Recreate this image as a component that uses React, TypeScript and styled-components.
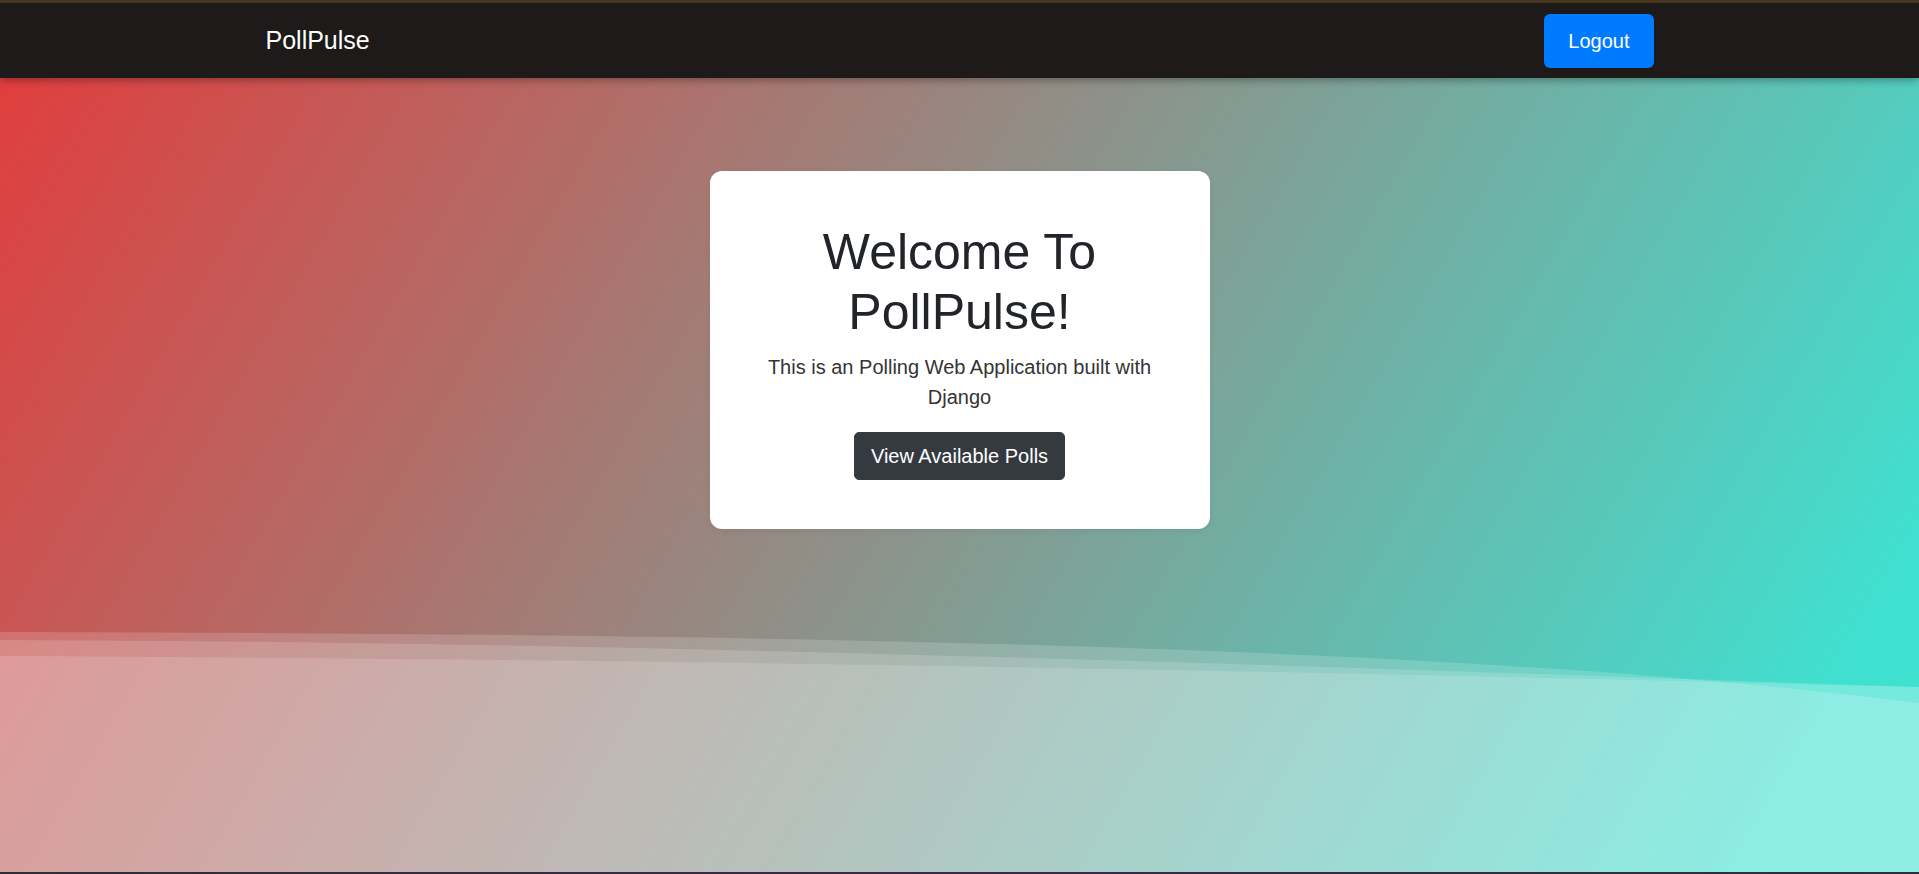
import React from "react";
import styled, { createGlobalStyle } from "styled-components";

const GlobalStyle = createGlobalStyle`
  html, body {
    margin: 0;
    padding: 0;
    background: #2f2a38;
  }
  body {
    font-family: "Liberation Sans", Arial, sans-serif;
    color: #212529;
  }
  * { box-sizing: border-box; }
`;

const Page = styled.div`
  display: flex;
  flex-direction: column;
  min-height: 874px;
  border-top: 3px solid #4b3b1f;
`;

const Navbar = styled.nav`
  height: 75px;
  background: #1d1a19;
  box-shadow: 0 2px 8px rgba(0, 0, 0, 0.35);
  position: relative;
  z-index: 2;
`;

const NavInner = styled.div`
  width: 1388px;
  height: 100%;
  margin: 0 auto;
  display: flex;
  align-items: center;
  justify-content: space-between;
`;

const Brand = styled.a`
  color: #ffffff;
  font-size: 25px;
  text-decoration: none;
  line-height: 1;
`;

const LogoutButton = styled.button`
  font-family: inherit;
  font-size: 20px;
  line-height: 30px;
  padding: 12px 24px;
  color: #ffffff;
  background: #007bff;
  border: none;
  border-radius: 6px;
  cursor: pointer;
`;

const Hero = styled.main`
  position: relative;
  height: 794px;
  overflow: hidden;
  background: linear-gradient(120deg, #e03e3e 0%, #40e0d0 92%);
  display: flex;
  justify-content: center;
  align-items: flex-start;
  padding-top: 93px;
`;

const Waves = styled.svg`
  position: absolute;
  left: 0;
  bottom: 0;
  width: 100%;
  height: 242px;
  z-index: 0;
`;

const Card = styled.section`
  position: relative;
  z-index: 1;
  width: 500px;
  background: #ffffff;
  border-radius: 12px;
  padding: 51px 40px 49px;
  text-align: center;
  box-shadow: 0 2px 6px rgba(0, 0, 0, 0.06);
`;

const Title = styled.h1`
  margin: 0 0 10px;
  font-size: 50px;
  line-height: 60px;
  font-weight: 400;
  color: #212529;
`;

const Lead = styled.p`
  margin: 0 0 20px;
  font-size: 20px;
  line-height: 30px;
  font-weight: 300;
  color: #343434;
`;

const DarkButton = styled.a`
  display: inline-block;
  font-size: 20px;
  line-height: 30px;
  padding: 8px 16px;
  color: #ffffff;
  background: #343a40;
  border: 1px solid #343a40;
  border-radius: 5px;
  text-decoration: none;
`;

const Footer = styled.footer`
  height: 2px;
  background: linear-gradient(90deg, #2b3036, #3b2947 50%, #2b3036);
`;

export default function App() {
  return (
    <>
      <GlobalStyle />
      <Page>
        <Navbar>
          <NavInner>
            <Brand href="#">PollPulse</Brand>
            <LogoutButton>Logout</LogoutButton>
          </NavInner>
        </Navbar>
        <Hero>
          <Waves viewBox="0 0 1919 242" preserveAspectRatio="none" aria-hidden="true">
            <path d="M0,2 C900,4 1500,20 1919,73 L1919,242 L0,242 Z" fill="rgba(255,255,255,0.17)" />
            <path d="M0,10 C700,12 1400,40 1919,57 L1919,242 L0,242 Z" fill="rgba(255,255,255,0.16)" />
            <path d="M0,26 C800,30 1400,44 1919,57 L1919,242 L0,242 Z" fill="rgba(255,255,255,0.15)" />
          </Waves>
          <Card>
            <Title>Welcome To PollPulse!</Title>
            <Lead>This is an Polling Web Application built with Django</Lead>
            <DarkButton href="#">View Available Polls</DarkButton>
          </Card>
        </Hero>
        <Footer />
      </Page>
    </>
  );
}
